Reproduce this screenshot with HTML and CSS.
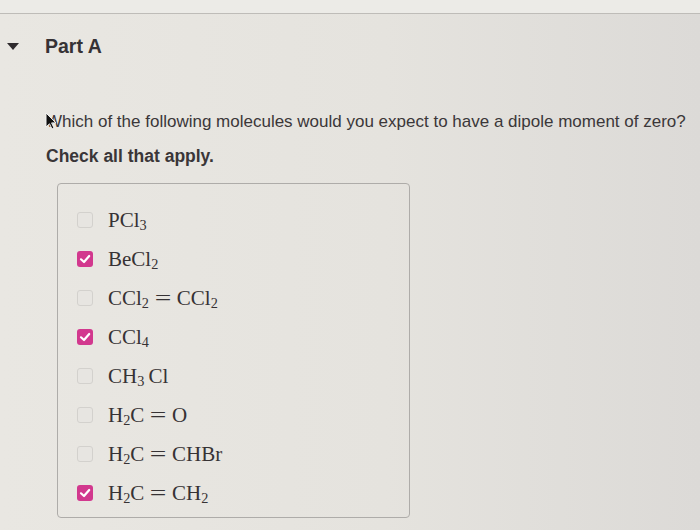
FILE: index.html
```html
<!DOCTYPE html>
<html>
<head>
<meta charset="utf-8">
<link rel="stylesheet" href="styles.css">
</head>
<body>
<div class="page">
  <div class="topbar"></div>
  <div class="header">
    <span class="caret"></span>
    <h2 class="title">Part A</h2>
  </div>
  <p class="question">Which of the following molecules would you expect to have a dipole moment of zero?<svg class="cursor" width="12" height="18" viewBox="0 0 12 18"><path d="M1 1 L1 15 L4.5 11.8 L7 17 L9 16 L6.6 10.9 L11 10.9 Z" fill="#111" stroke="#f2f2f2" stroke-width="1"/></svg></p>
  <p class="instruct">Check all that apply.</p>
  <div class="choices">
    <div class="row"><span class="cb"></span><span class="chem">PCl<sub>3</sub></span></div>
    <div class="row"><span class="cb on"><svg viewBox="0 0 16 16" width="16" height="16"><path d="M4 8.3 L7 11 L12.2 5" fill="none" stroke="#fff" stroke-width="2.2" stroke-linecap="round" stroke-linejoin="round"/></svg></span><span class="chem">BeCl<sub>2</sub></span></div>
    <div class="row"><span class="cb"></span><span class="chem">CCl<sub>2</sub><span class="eq">=</span>CCl<sub>2</sub></span></div>
    <div class="row"><span class="cb on"><svg viewBox="0 0 16 16" width="16" height="16"><path d="M4 8.3 L7 11 L12.2 5" fill="none" stroke="#fff" stroke-width="2.2" stroke-linecap="round" stroke-linejoin="round"/></svg></span><span class="chem">CCl<sub>4</sub></span></div>
    <div class="row"><span class="cb"></span><span class="chem">CH<sub>3</sub>&#8201;Cl</span></div>
    <div class="row"><span class="cb"></span><span class="chem">H<sub>2</sub>C<span class="eq">=</span>O</span></div>
    <div class="row"><span class="cb"></span><span class="chem">H<sub>2</sub>C<span class="eq">=</span>CHBr</span></div>
    <div class="row"><span class="cb on"><svg viewBox="0 0 16 16" width="16" height="16"><path d="M4 8.3 L7 11 L12.2 5" fill="none" stroke="#fff" stroke-width="2.2" stroke-linecap="round" stroke-linejoin="round"/></svg></span><span class="chem">H<sub>2</sub>C<span class="eq">=</span>CH<sub>2</sub></span></div>
  </div>
</div>
</body>
</html>
```
FILE: styles.css
```css
html, body {
  margin: 0;
  padding: 0;
}
body {
  width: 700px;
  height: 530px;
  overflow: hidden;
  background: linear-gradient(to right, #e9e7e2 0%, #e5e3de 55%, #dcdad7 100%);
  font-family: "Liberation Sans", Arial, sans-serif;
  color: #3a3638;
}
.page {
  height: 530px;
}
.topbar {
  height: 13px;
  background: #ecebe7;
  border-bottom: 1px solid #bebcb8;
}
.header {
  height: 64px;
  display: flex;
  align-items: center;
  padding-left: 7px;
}
.caret {
  width: 0;
  height: 0;
  border-left: 6.5px solid transparent;
  border-right: 6.5px solid transparent;
  border-top: 7px solid #2f2b2e;
  margin-right: 26px;
}
.title {
  margin: 0;
  font-size: 19.5px;
  font-weight: bold;
  color: #363235;
  line-height: 22px;
}
.question {
  position: relative;
  margin: 34px 0 0 0;
  padding-left: 46px;
  font-size: 17px;
  line-height: 20px;
  color: #3b3739;
  white-space: nowrap;
}
.cursor {
  position: absolute;
  left: 45px;
  top: 0px;
}
.instruct {
  margin: 14px 0 0 0;
  padding-left: 46px;
  font-size: 17.5px;
  line-height: 20px;
  font-weight: bold;
  color: #3a3638;
}
.choices {
  margin: 17px 0 0 57px;
  width: 353px;
  height: 335px;
  box-sizing: border-box;
  border: 1px solid #aeaca9;
  border-radius: 4px;
  padding-top: 16px;
}
.row {
  height: 39px;
  display: flex;
  align-items: center;
  padding-left: 19px;
}
.cb {
  width: 16px;
  height: 16px;
  box-sizing: border-box;
  border: 1.5px solid #d3d1cd;
  border-radius: 3px;
  background: #e7e5e1;
  margin-right: 15px;
  flex: none;
  display: flex;
}
.cb.on {
  border: none;
  background: #d2388e;
}
.chem {
  font-family: "Liberation Serif", "Times New Roman", serif;
  font-size: 21px;
  color: #363234;
  line-height: 24px;
}
.chem sub {
  font-size: 0.68em;
  vertical-align: -0.22em;
  line-height: 0;
}
.eq {
  display: inline-block;
  margin: 0 0.38em;
  transform: scaleX(1.4);
}
```
